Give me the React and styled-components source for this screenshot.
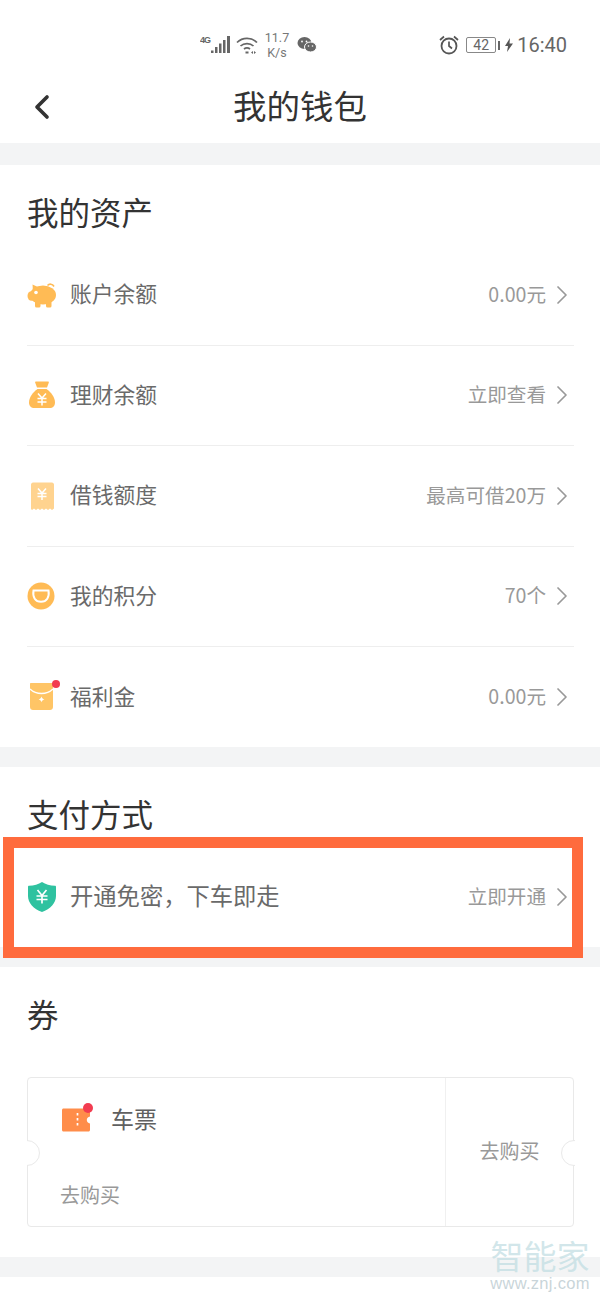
import React from "react";
import styled, { createGlobalStyle } from "styled-components";
import { ChevronRight, ChevronLeft } from "lucide-react";

const FONT = `"Noto Sans CJK SC", "Noto Sans", sans-serif`;

const GlobalStyle = createGlobalStyle`
  html, body { margin: 0; padding: 0; background: #fff; }
  body { font-family: ${FONT}; width: 600px; height: 1300px; overflow: hidden; }
  * { box-sizing: border-box; }
`;

const PigIcon = () => (
  <svg width="30" height="26" viewBox="0 0 30 26">
    <path d="M20.500 3.500c1.800-2 5-1.800 6.500 1" stroke="#ffbb55" strokeWidth="1.600" fill="none" />
    <path d="M5.500 2.500l6.500 3-6 4z" fill="#ffbb55" />
    <ellipse cx="16" cy="13" rx="13" ry="9.500" fill="#ffbb55" />
    <ellipse cx="4.500" cy="14" rx="4" ry="4.800" fill="#ffbb55" />
    <rect x="8" y="18" width="5.500" height="7.500" rx="1.500" fill="#ffbb55" />
    <rect x="19" y="18" width="5.500" height="7.500" rx="1.500" fill="#ffbb55" />
    <circle cx="9" cy="10.500" r="1.800" fill="#fff" />
  </svg>
);

const BagIcon = () => (
  <svg width="30" height="32" viewBox="0 0 30 32">
    <path d="M9 2.500h12c.6 0 1 .6.8 1.200L20 8.500H10L8.200 3.700C8 3.100 8.400 2.500 9 2.500z" fill="#ffbb55" />
    <path d="M10.500 10h9c4.500 3 8.500 8.500 8.500 13.500 0 3.500-2 5.500-5.500 5.500h-15C4 29 2 27 2 23.500 2 18.500 6 13 10.500 10z" fill="#ffbb55" />
    <path d="M11 14.500l4 4.500 4-4.500M10.500 19.500h9M10.500 23h9M15 19v7.500" stroke="#fff" strokeWidth="1.500" fill="none" />
  </svg>
);

const ReceiptIcon = () => (
  <svg width="30" height="30" viewBox="0 0 30 30">
    <path d="M5 1.500h20c1 0 2 1 2 2v24l-2 1.500-2-1.500-2 1.500-2-1.500-2 1.500-2-1.500-2 1.500-2-1.500-2 1.500-2-1.500-2 1.500-1-1V3.500c0-1 1-2 2-2z" fill="#ffd38f" />
    <path d="M11 7.500l4 4.500 4-4.500M10.500 12.500h9M10.500 15.500h9M15 12v7" stroke="#fff" strokeWidth="1.500" fill="none" />
  </svg>
);

const CoinIcon = () => (
  <svg width="28" height="28" viewBox="0 0 28 28">
    <circle cx="14" cy="14" r="13.500" fill="#ffbb55" />
    <path d="M6.500 8.500h15c.5 3 .2 6-1.200 8.200-1.300 2-3.600 3.100-6.300 3.100s-5-1.100-6.300-3.100c-1.400-2.200-1.700-5.200-1.200-8.200z" stroke="#fff" strokeWidth="2" fill="none" />
  </svg>
);

const EnvelopeIcon = () => (
  <svg width="30" height="30" viewBox="0 0 30 30">
    <path d="M4 1h21c.6 0 1 .4 1 1v23c0 1.700-1.300 3-3 3H6c-1.700 0-3-1.300-3-3V2c0-.6.400-1 1-1z" fill="#ffc566" />
    <path d="M3 7c3 2.800 7 4.500 11.500 4.500S23 9.800 26 7" stroke="#fff" strokeWidth="1.400" fill="none" />
    <path d="M14.500 14.500c.5 1.700 1 2.300 2.900 2.900-1.900.6-2.400 1.200-2.900 2.900-.5-1.700-1-2.300-2.900-2.900 1.900-.6 2.400-1.200 2.900-2.900z" fill="#fff" />
  </svg>
);

const ShieldIcon = () => (
  <svg width="30" height="32" viewBox="0 0 30 32">
    <path d="M15 1c3.500 2.300 8 3.500 13 3.800.6 0 1 .5 1 1V15c0 7-5.500 12.800-14 16C6.500 27.800 1 22 1 15V5.800c0-.5.400-1 1-1C7 4.500 11.500 3.300 15 1z" fill="#2fc2a0" />
    <path d="M10.500 9l4.500 5.500L19.500 9M9.500 15h11M9.500 18.500h11M15 14.500v8" stroke="#fff" strokeWidth="1.700" fill="none" />
  </svg>
);

const TicketIcon = () => (
  <svg width="30" height="24" viewBox="0 0 30 24">
    <path d="M2.500 0.500h25c.8 0 1.500.7 1.500 1.500v6.500c-2 .4-3.200 1.800-3.200 3.500s1.200 3.100 3.200 3.500V22c0 .8-.7 1.500-1.500 1.500h-25C1.700 23.500 1 22.800 1 22V2C1 1.200 1.700.5 2.500.5z" fill="#ff8d4a" />
    <path d="M16.500 5v15" stroke="#fff" strokeWidth="1.700" strokeDasharray="2.500 2.500" />
  </svg>
);

const ASSETS = [
  { icon: <PigIcon />, label: "账户余额", value: "0.00元" },
  { icon: <BagIcon />, label: "理财余额", value: "立即查看" },
  { icon: <ReceiptIcon />, label: "借钱额度", value: "最高可借20万" },
  { icon: <CoinIcon />, label: "我的积分", value: "70个" },
  { icon: <EnvelopeIcon />, label: "福利金", value: "0.00元", dot: true },
];

const App = () => (
  <>
    <GlobalStyle />
    <Page>
      <StatusBar>
        <StatusLeft>
          <svg width="31" height="20" viewBox="0 0 31 20">
            <text x="0" y="8" fontSize="9" fontWeight="700" fill="#666" fontFamily="Liberation Sans" textLength="11">4G</text>
            <path d="M11 15.500h2.500V18H11zM15 12h2.500v6H15zM19 8.500h2.500V18H19zM23 5h2.500v13H23zM27 1h3v17h-3z" fill="#666" />
          </svg>
          <WifiIcon width="22" height="18" viewBox="0 0 22 18">
            <path d="M1 6.500C6.500 1 15.500 1 21 6.500M4.500 10c3.500-3.300 9.500-3.300 13 0M8 13c1.800-1.400 4.200-1.400 6 0" stroke="#666" strokeWidth="1.700" fill="none" />
            <path d="M9.500 15.500h3v2h-3zM15 16.500l2-1.500v3zM18 15l2 1.500-2 1.500z" fill="#666" />
          </WifiIcon>
          <Speed>11.7<br />K/s</Speed>
          <WechatIcon width="20" height="18" viewBox="0 0 20 18">
            <ellipse cx="7.500" cy="7" rx="7" ry="6" fill="#666" />
            <ellipse cx="13.500" cy="11" rx="6" ry="5" fill="#666" stroke="#fff" strokeWidth="1" />
            <circle cx="5" cy="5.500" r="0.900" fill="#fff" />
            <circle cx="9.500" cy="5.500" r="0.900" fill="#fff" />
            <circle cx="11.500" cy="10" r="0.800" fill="#fff" />
            <circle cx="15.500" cy="10" r="0.800" fill="#fff" />
          </WechatIcon>
        </StatusLeft>
        <StatusRight>
          <svg width="22" height="20" viewBox="0 0 22 20">
            <circle cx="11" cy="11" r="7.500" stroke="#555" strokeWidth="1.800" fill="none" />
            <path d="M11 6.500V11l3 2.500M2 5l4-3.500M20 5l-4-3.500" stroke="#555" strokeWidth="1.700" fill="none" />
          </svg>
          <Battery>42</Battery>
          <BatteryTip />
          <svg width="8" height="14" viewBox="0 0 8 14">
            <path d="M5 0L0 8h3l-1 6 6-8.500H4.500z" fill="#555" />
          </svg>
          <Clock>16:40</Clock>
        </StatusRight>
      </StatusBar>

      <NavBar>
        <BackButton><ChevronLeft size={40} strokeWidth={2.2} /></BackButton>
        <NavTitle>我的钱包</NavTitle>
      </NavBar>

      <Gap $height={22} />
      <Section $height={582}>
        <SectionTitle>我的资产</SectionTitle>
        {ASSETS.map((item, i) => (
          <Row key={item.label} $divided={i < ASSETS.length - 1}>
            <RowIcon>
              {item.icon}
              {item.dot && <RedDot />}
            </RowIcon>
            <RowLabel>{item.label}</RowLabel>
            <RowValue>{item.value}</RowValue>
            <RowArrow><ChevronRight size={32} strokeWidth={1.3} /></RowArrow>
          </Row>
        ))}
      </Section>

      <Gap $height={20} />
      <Section $height={180}>
        <SectionTitle>支付方式</SectionTitle>
        <Row>
          <RowIcon><ShieldIcon /></RowIcon>
          <RowLabel $large>开通免密，下车即走</RowLabel>
          <RowValue>立即开通</RowValue>
          <RowArrow><ChevronRight size={32} strokeWidth={1.3} /></RowArrow>
        </Row>
      </Section>

      <Gap $height={20} />
      <Section $height={290}>
        <SectionTitle>券</SectionTitle>
        <Coupon>
          <CouponMain>
            <CouponHead>
              <CouponIcon>
                <TicketIcon />
                <RedDot />
              </CouponIcon>
              <CouponName>车票</CouponName>
            </CouponHead>
            <CouponAction>去购买</CouponAction>
          </CouponMain>
          <CouponSide>去购买</CouponSide>
          <Notch $side="left" />
          <Notch $side="right" />
        </Coupon>
      </Section>
      <Gap $height={20} />

      <Highlight />

      <Watermark>
        <WatermarkName>智能家</WatermarkName>
        <WatermarkUrl>www.znj.com</WatermarkUrl>
      </Watermark>
    </Page>
  </>
);

const Page = styled.div`
  position: relative;
  width: 600px;
  height: 1300px;
  overflow: hidden;
  background: #fff;
`;

const StatusBar = styled.div`
  height: 68px;
  padding: 22px 33px 0 200px;
  display: flex;
  justify-content: space-between;
  align-items: center;
  color: #666;
`;

const StatusLeft = styled.div`
  display: flex;
  align-items: center;
`;

const WifiIcon = styled.svg`
  margin-left: 5px;
`;

const WechatIcon = styled.svg`
  margin-left: 6px;
`;

const Speed = styled.div`
  font-family: "Roboto", sans-serif;
  font-size: 12.5px;
  line-height: 15px;
  text-align: center;
  width: 28px;
  margin-left: 5px;
  color: #777;
`;

const StatusRight = styled.div`
  display: flex;
  align-items: center;
`;

const Battery = styled.div`
  width: 30px;
  height: 16px;
  margin-left: 6px;
  border: 1px solid #888;
  border-radius: 2px;
  font-family: "Roboto", sans-serif;
  font-size: 14px;
  line-height: 14px;
  text-align: center;
  color: #666;
`;

const BatteryTip = styled.div`
  width: 2px;
  height: 9px;
  margin: 0 5px 0 2px;
  background: #666;
`;

const Clock = styled.div`
  font-family: "Roboto", sans-serif;
  font-size: 20px;
  margin-left: 4px;
  color: #666;
`;

const NavBar = styled.div`
  position: relative;
  height: 75px;
  padding-bottom: 1px;
  display: flex;
  align-items: center;
  justify-content: center;
`;

const BackButton = styled.div`
  position: absolute;
  left: 22px;
  top: 19px;
  color: #333;
  display: flex;
`;

const NavTitle = styled.div`
  font-size: 33.5px;
  line-height: 40px;
  color: #333;
`;

const Gap = styled.div`
  height: ${(p) => p.$height}px;
  background: #f3f4f5;
`;

const Section = styled.section`
  height: ${(p) => p.$height}px;
  padding: 0 26px 0 27px;
`;

const SectionTitle = styled.h2`
  margin: 0;
  height: 96px;
  padding-top: 25px;
  font-size: 31.5px;
  line-height: 42px;
  font-weight: 400;
  color: #333;
`;

const Row = styled.div`
  height: 100.5px;
  margin-top: -16px;
  margin-bottom: 16px;
  display: flex;
  align-items: center;
  border-bottom: ${(p) => (p.$divided ? "1px solid #eeeeee" : "none")};
`;

const RowIcon = styled.div`
  position: relative;
  width: 43px;
  display: flex;
  align-items: center;
`;

const RowLabel = styled.div`
  flex: 1;
  padding-bottom: 4px;
  font-size: ${(p) => (p.$large ? 23.3 : 21.75)}px;
  color: #6a6a6a;
`;

const RowValue = styled.div`
  padding-bottom: 3px;
  font-size: 19.6px;
  color: #999;
`;

const RowArrow = styled.div`
  width: 32px;
  margin-right: -4px;
  display: flex;
  color: #999;
`;

const RedDot = styled.span`
  position: absolute;
  top: -2px;
  left: 25px;
  width: 8px;
  height: 8px;
  border-radius: 50%;
  background: #f23c50;
`;

const Coupon = styled.div`
  position: relative;
  height: 150px;
  margin-top: 14px;
  display: flex;
  border: 1px solid #e9e9e9;
  border-radius: 4px;
`;

const CouponMain = styled.div`
  width: 418px;
  padding: 24px 0 0 33px;
  border-right: 1px solid #f0f0f0;
`;

const CouponHead = styled.div`
  display: flex;
  align-items: center;
  gap: 20px;
  height: 36px;
`;

const CouponIcon = styled.div`
  position: relative;
  width: 30px;
  height: 24px;
  display: flex;
  ${RedDot} {
    top: -5px;
    left: 22px;
    width: 10px;
    height: 10px;
  }
`;

const CouponName = styled.div`
  padding-bottom: 4px;
  font-size: 23px;
  color: #606060;
`;

const CouponAction = styled.div`
  margin: 42px 0 0 -1px;
  font-size: 20px;
  color: #999;
`;

const CouponSide = styled.div`
  flex: 1;
  display: flex;
  align-items: center;
  justify-content: center;
  padding-bottom: 4px;
  font-size: 20px;
  color: #999;
`;

const Notch = styled.span`
  position: absolute;
  top: 62px;
  ${(p) => p.$side}: -14px;
  width: 26px;
  height: 26px;
  border-radius: 50%;
  background: #fff;
  border: 1px solid #e9e9e9;
  clip-path: inset(-1px ${(p) => (p.$side === "left" ? "-1px" : "12px")} -1px ${(p) => (p.$side === "left" ? "13px" : "-1px")});
`;

const Highlight = styled.div`
  position: absolute;
  left: 3px;
  top: 837px;
  width: 580px;
  height: 121px;
  border: 11px solid #ff6b3d;
`;

const Watermark = styled.div`
  position: absolute;
  left: 490px;
  top: 1236px;
  width: 100px;
  text-align: center;
`;

const WatermarkName = styled.div`
  font-size: 33px;
  line-height: 38px;
  color: rgba(190, 220, 225, 0.7);
`;

const WatermarkUrl = styled.div`
  font-family: "Liberation Sans", sans-serif;
  font-size: 16.5px;
  line-height: 18px;
  letter-spacing: 0.3px;
  color: rgba(190, 205, 210, 0.85);
`;

export default App;
